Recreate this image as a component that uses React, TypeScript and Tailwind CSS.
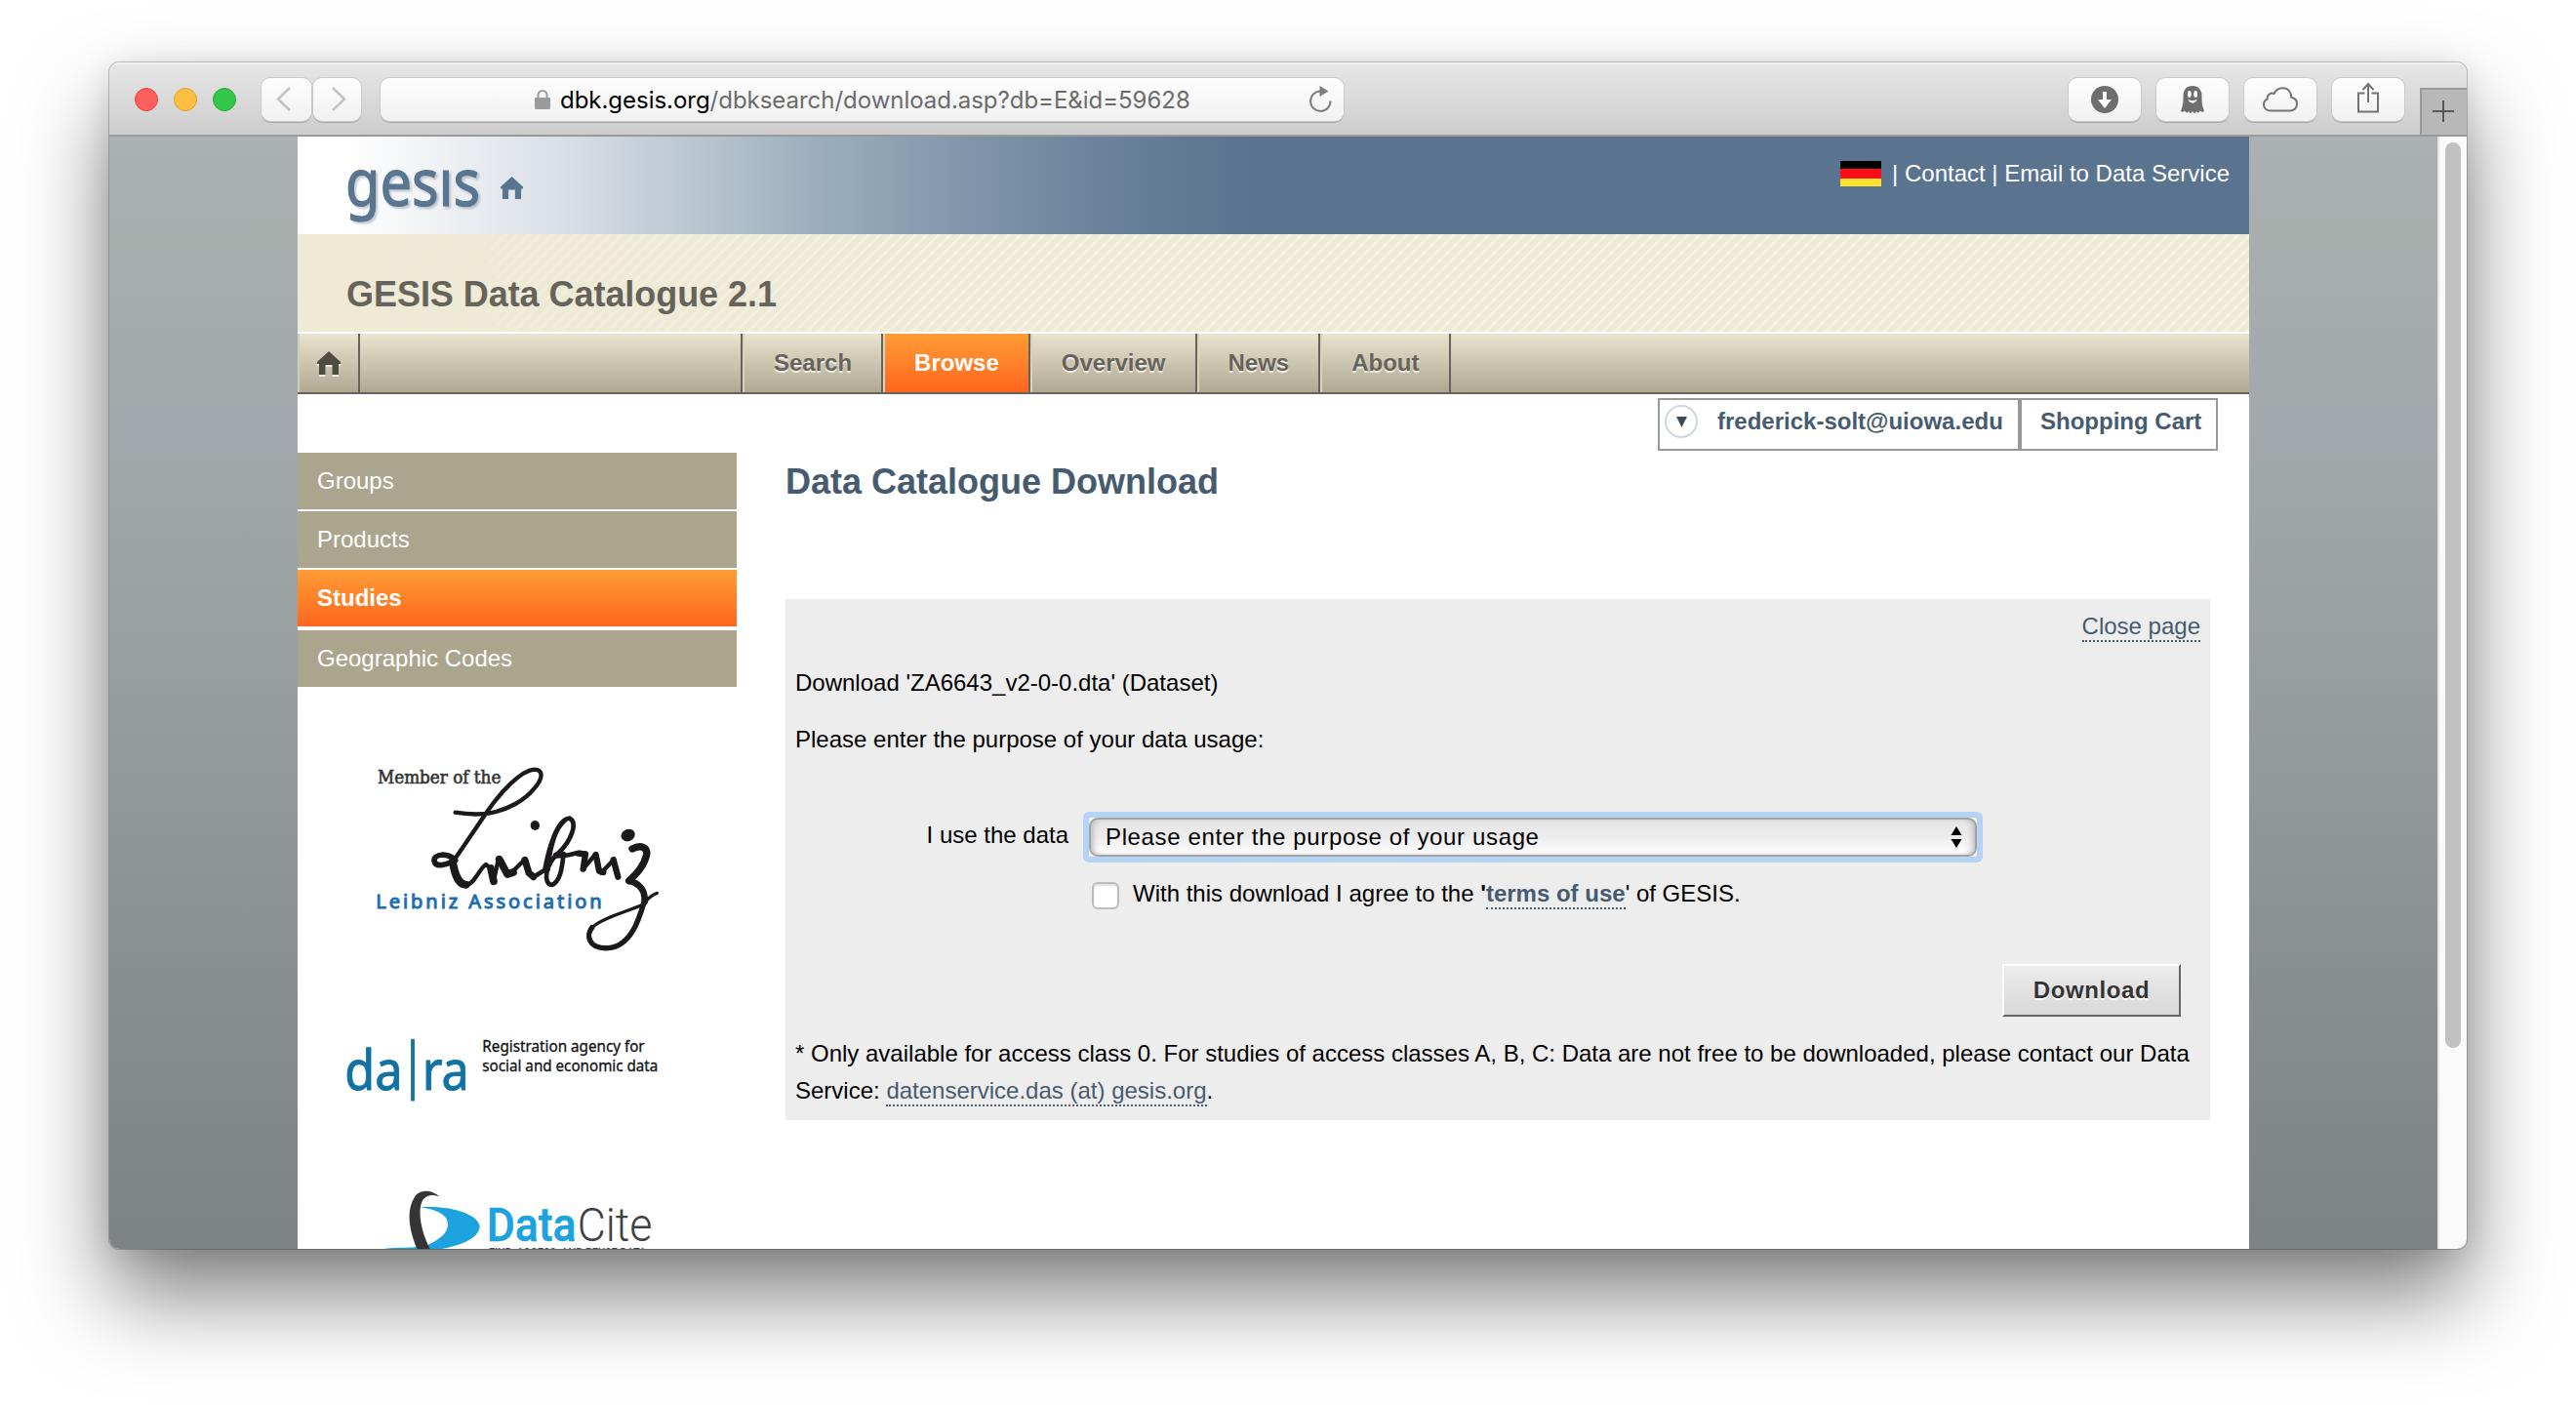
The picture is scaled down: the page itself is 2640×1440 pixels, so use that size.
import React from 'react';

const CHROME_BTN =
  'flex h-[44px] items-center justify-center rounded-[9px] bg-linear-to-b from-[#fdfdfd] to-[#f1f1f1] shadow-[0_0_0_1px_#c9c9c9,0_2px_0_0_#a9a9a9]';

function House({ fill, className }: { fill: string; className?: string }) {
  return (
    <svg viewBox="0 0 24 24" className={className} fill={fill}>
      <path d="M12 0 24 11v2h-2v11h-6.500V14h-7v10H2V13H0v-2z" />
    </svg>
  );
}

function Toolbar() {
  return (
    <div className="flex h-[76px] shrink-0 border-t-2 border-b-2 border-t-[#f1f1f1] border-b-[#9a9a9a] bg-linear-to-b from-[#e6e6e6] to-[#cdcdcd]">
      <div className="flex w-full items-start pt-[14px]">
        <div className="flex h-[44px] items-center gap-4 pl-[26px]">
          <span className="size-6 rounded-full border border-[#e2463f] bg-[#fd605c]" />
          <span className="size-6 rounded-full border border-[#e0a02f] bg-[#fdbe41]" />
          <span className="size-6 rounded-full border border-[#24a934] bg-[#34c84a]" />
        </div>
        <div className="ml-[26px] flex gap-[2px]">
          <button className={`${CHROME_BTN} w-[51px]`}>
            <svg viewBox="0 0 51 44" className="h-[44px] w-[51px]" fill="none" stroke="#c2c2c2" strokeWidth="2.500">
              <path d="M29 10 17 21.500 29 33" />
            </svg>
          </button>
          <button className={`${CHROME_BTN} w-[49px]`}>
            <svg viewBox="0 0 49 44" className="h-[44px] w-[49px]" fill="none" stroke="#c2c2c2" strokeWidth="2.500">
              <path d="M20 10 32 21.500 20 33" />
            </svg>
          </button>
        </div>
        <div className={`${CHROME_BTN} ml-[20px] w-[987px] justify-start!`}>
          <svg viewBox="0 0 16 20" className="ml-[158px] h-[20px] w-[16px] shrink-0">
            <path d="M3.500 9V5.500a4.500 4.500 0 0 1 9 0V9" fill="none" stroke="#9b9b9b" strokeWidth="2" />
            <rect y="8" width="16" height="12" rx="1" fill="#9b9b9b" />
          </svg>
          <span className="ml-[10px] w-[660px] pt-[2px] whitespace-nowrap font-['Inter'] text-[24px] leading-[44px] tracking-[-0.03px] text-[#6b6b6b]">
            <span className="text-black">dbk.gesis.org</span>/dbksearch/download.asp?db=E&amp;id=59628
          </span>
          <svg viewBox="0 0 24 28" className="mr-[12px] ml-auto h-[28px] w-[24px]">
            <path d="M22.500 15.500A10.200 10.200 0 1 1 12 5.500" fill="none" stroke="#7d7d7d" strokeWidth="2" />
            <path d="M11.500 0v11l9-5.500z" fill="#7d7d7d" />
          </svg>
        </div>
        <div className="ml-auto flex gap-[16px]">
          <button className={`${CHROME_BTN} w-[74px]`}>
            <svg viewBox="0 0 28 28" className="size-[28px]">
              <circle cx="14" cy="14" r="14" fill="#6e6e6e" />
              <path d="M12 6h4v8h5l-7 9-7-9h5z" fill="#fff" />
            </svg>
          </button>
          <button className={`${CHROME_BTN} w-[74px]`}>
            <svg viewBox="0 0 24 28" className="h-[28px] w-[24px]">
              <path
                d="M12 0C6 0 2.500 4 2.500 10c0 6 0 9-2.500 16 1.500 1 2.500 1 4-.5 1.300 2.500 2.700 2.500 4 .5 1.300 2.500 2.700 2.500 4 0 1.300 2.500 2.700 2.500 4 0 1.300 2 2.700 2 4-.5 1.500 1.500 2.500 1.500 4 .5-2.500-7-2.500-10-2.500-16C21.500 4 18 0 12 0z"
                fill="#6e6e6e"
              />
              <ellipse cx="8.800" cy="8.500" rx="1.900" ry="3.400" fill="#fff" />
              <ellipse cx="15.200" cy="8.500" rx="1.900" ry="3.400" fill="#fff" />
              <path d="M7.500 13.500c2 2 7 2 9 0-.5 5.500-8.500 5.500-9 0z" fill="#fff" />
            </svg>
          </button>
          <button className={`${CHROME_BTN} w-[74px]`}>
            <svg viewBox="0 0 36 26" className="h-[26px] w-[36px]" fill="none" stroke="#737373" strokeWidth="2">
              <path d="M8 24.500C3.500 24.500 1 21.500 1 18.300c0-2.800 1.400-4.600 3.600-5.600C4 8.500 8 5.500 11.500 7 13.500 3 17 1.300 20.500 1.300c5.500 0 8.700 4 8.700 9.500C33 11.500 35 14.500 35 17.500c0 4-3 7-7 7z" />
            </svg>
          </button>
          <button className={`${CHROME_BTN} w-[74px]`}>
            <svg viewBox="0 0 24 32" className="mb-[4px] h-[32px] w-[24px]" fill="none" stroke="#737373" strokeWidth="2">
              <path d="M8.500 11.500H2V30.500h20V11.500h-6.500M12 21V2M6.500 8 12 2l5.500 6" />
            </svg>
          </button>
        </div>
        <div className="mt-[10px] ml-[16px] flex h-[48px] w-[48px] shrink-0 items-center justify-center border-t-2 border-l-2 border-[#999] bg-[#b8b8b8] pr-[2px] pb-[2px]">
          <svg viewBox="0 0 22 22" className="size-[22px]" stroke="#595959" strokeWidth="2">
            <path d="M11 0v22M0 11h22" />
          </svg>
        </div>
      </div>
    </div>
  );
}

function Header() {
  return (
    <header className="flex h-[100px] shrink-0 items-start justify-between bg-[linear-gradient(to_right,#fff_0px,#fff_50px,#eef0f3_150px,#dbe1e8_260px,#c8d1db_345px,#b9c6d0_410px,#9fb1c0_515px,#8196ab_685px,#6b839b_820px,#5f7993_920px,#5a7490_985px)] pr-[20px]">
      <div className="flex">
        <svg viewBox="0 0 160 100" className="ml-[45px] h-[100px] w-[160px] overflow-visible">
          <text
            x="4"
            y="71"
            textLength="138"
            lengthAdjust="spacingAndGlyphs"
            fill="#5a7590"
            stroke="#5a7590"
            strokeWidth="1.200"
            className="font-['Noto_Sans'] text-[68px] drop-shadow-[2px_2px_1px_rgba(80,100,120,0.35)]"
            aria-label="gesis"
          >
            gesıs
          </text>
        </svg>
        <House fill="#5a7590" className="mt-[41px] ml-[3px] size-[23px]" />
      </div>
      <div className="flex items-center pt-[24px] text-[24px] leading-[28px] text-white">
        <svg viewBox="0 0 42 26" className="mr-[11px] h-[26px] w-[42px]">
          <rect width="42" height="9" fill="#000" />
          <rect y="8" width="42" height="10" fill="#ff0c18" />
          <rect y="18" width="42" height="8" fill="#ffe32e" />
        </svg>
        <span>|&nbsp;Contact&nbsp;|&nbsp;Email to Data Service</span>
      </div>
    </header>
  );
}

const NAV = [
  { label: 'Search' },
  { label: 'Browse', active: true },
  { label: 'Overview' },
  { label: 'News' },
  { label: 'About' },
];

function Nav() {
  return (
    <nav className="flex h-[64px] shrink-0 border-t-2 border-b-2 border-t-white border-b-[#66635a] bg-linear-to-b from-[#e9e4cf] to-[#b0a893]">
      <div className="flex w-[64px] items-center justify-center border-r-2 border-l-2 border-l-[#d3cdbb] border-r-[#66635a]">
        <House fill="#4e4c42" className="size-[24px] drop-shadow-[0_2px_0_rgba(255,255,255,0.7)]" />
      </div>
      <div className="w-[390px]" />
      <ul className="flex border-l-2 border-[#66635a] text-[24px] leading-[60px] font-bold">
        {NAV.map((n) => (
          <li
            key={n.label}
            className={
              n.active
                ? 'border-r-2 border-l-2 border-l-[#d8d2c0] border-r-[#66635a] bg-linear-to-b from-[#ff9c35] to-[#ff641e] bg-clip-padding px-[30px] text-white'
                : 'border-r-2 border-l-2 border-l-[#d8d2c0] border-r-[#66635a] px-[30px] text-[#66635a] [text-shadow:0_2px_1px_rgba(255,255,255,0.8)]'
            }
          >
            {n.label}
          </li>
        ))}
      </ul>
    </nav>
  );
}

function LeibnizLogo() {
  return (
    <svg viewBox="0 0 1140 780" className="mt-[36px] ml-[35px] h-[260px] w-[380px]">
      <text
        x="141"
        y="190"
        textLength="379"
        lengthAdjust="spacingAndGlyphs"
        fill="#333"
        stroke="#333"
        strokeWidth="2"
        className="font-['DejaVu_Serif'] text-[56px]"
      >
        Member of the
      </text>
      <text x="136" y="573" textLength="694" fill="#1c6db3" stroke="#1c6db3" strokeWidth="3" className="font-['Noto_Sans'] text-[60px]">
        Leibniz Association
      </text>
      <g fill="none" stroke="#1b191b" strokeLinecap="round" strokeLinejoin="round">
        <path strokeWidth="13" d="M380 278C410 283 450 285 482 281C545 270 595 238 622 205C652 172 650 146 622 146C580 150 520 215 478 275L383 415" />
        <path strokeWidth="17" d="M380 425C355 400 314 406 315 426C318 448 350 440 370 430" />
        <path strokeWidth="24" d="M372 430C378 470 392 500 412 500" />
        <path strokeWidth="13" d="M412 502C440 498 452 452 474 438L486 448" />
        <path strokeWidth="23" d="M489 450L498 490M515 422L540 468L558 462" />
        <path strokeWidth="13" d="M498 488L513 418M548 468L594 422" />
        <path strokeWidth="21" d="M594 424L606 464L620 476" />
        <path strokeWidth="14" d="M618 478L655 455C665 400 690 298 732 296C756 310 738 365 695 405C655 440 650 498 676 501C702 492 708 450 712 410C735 412 750 396 780 404" />
        <path strokeWidth="19" d="M690 410L712 408M758 404L780 406L773 452M812 408L822 458L835 462M866 424L880 476" />
        <path strokeWidth="13" d="M773 452L812 405M828 464L868 422M664 455C670 400 685 330 715 305" />
        <path strokeWidth="22" d="M924 390C950 376 972 385 968 408C960 445 935 468 914 488" />
        <path strokeWidth="20" d="M914 488C948 496 964 520 962 552" />
        <path strokeWidth="16" d="M960 555C945 605 920 690 850 695C785 698 783 652 800 632" />
        <path strokeWidth="10" d="M800 632C835 600 905 585 955 562C970 545 985 530 1000 526" />
      </g>
      <ellipse cx="625" cy="318" rx="14" ry="15" fill="#1b191b" />
      <ellipse cx="911" cy="348" rx="22" ry="18" fill="#1b191b" transform="rotate(-25 911 348)" />
    </svg>
  );
}

function DataLogos() {
  return (
    <svg viewBox="0 0 1200 750" className="mt-[30px] ml-[25px] h-[250px] w-[400px]">
      <g fill="#1272a5" stroke="#1272a5" strokeWidth="3" className="font-['Noto_Sans'] text-[172px]">
        <text x="70" y="261" textLength="178" lengthAdjust="spacingAndGlyphs">
          da
        </text>
        <rect x="275" y="106" width="8" height="188" />
        <text x="308" y="261" textLength="144" lengthAdjust="spacingAndGlyphs">
          ra
        </text>
      </g>
      <g fill="#111" stroke="#111" strokeWidth="1" className="font-['Noto_Sans'] text-[50px]">
        <text x="493" y="145" textLength="499" lengthAdjust="spacingAndGlyphs">
          Registration agency for
        </text>
        <text x="493" y="205" textLength="540" lengthAdjust="spacingAndGlyphs">
          social and economic data
        </text>
      </g>
      <path d="M302 622C400 615 482 645 485 681C482 720 420 742 355 752H180C230 742 300 752 330 736C365 718 388 700 387 672C385 642 345 628 302 622z" fill="#1ba2df" />
      <path d="M362 590C335 565 300 568 285 590C262 625 262 680 293 752H333C300 690 293 620 312 597C325 582 345 583 362 590z" fill="#353535" />
      <text x="506" y="725" textLength="276" lengthAdjust="spacingAndGlyphs" fill="#1ba2df" stroke="#1ba2df" strokeWidth="1.500" className="font-['Roboto'] text-[147px] font-medium">
        Data
      </text>
      <text x="785" y="725" textLength="230" lengthAdjust="spacingAndGlyphs" fill="#404040" className="font-['Roboto'] text-[147px] font-light">
        Cite
      </text>
      <text x="513" y="773" textLength="484" lengthAdjust="spacingAndGlyphs" fill="#404040" className="font-['Roboto'] text-[40px] font-medium">
        FIND, ACCESS, AND REUSE DATA
      </text>
    </svg>
  );
}

function Sidebar() {
  return (
    <aside className="w-[450px] shrink-0 pt-[60px]">
      <ul className="text-[24px] leading-[58px] text-white">
        <li className="mb-[2px] bg-[#aca58e] pl-[20px]">Groups</li>
        <li className="mb-[2px] bg-[#aca58e] pl-[20px]">Products</li>
        <li className="mb-[4px] bg-linear-to-b from-[#ff9c35] to-[#ff641e] pl-[20px] font-bold">Studies</li>
        <li className="bg-[#aca58e] pl-[20px]">Geographic Codes</li>
      </ul>
      <LeibnizLogo />
      <DataLogos />
    </aside>
  );
}

const LINK = 'border-b-2 border-dotted border-[#465b70] pb-px text-[#465b70]';

function DownloadPanel() {
  return (
    <section className="mt-[100px] h-[534px] w-[1460px] bg-[#ededed] px-[10px] pt-[9px] text-[24px] leading-[38px] text-black">
      <div className="text-right">
        <a className={LINK}>Close page</a>
      </div>
      <p className="mt-[20px]">Download 'ZA6643_v2-0-0.dta' (Dataset)</p>
      <p className="mt-[20px]">Please enter the purpose of your data usage:</p>
      <div className="mt-[61px] flex h-[40px] items-start">
        <label className="w-[280px] text-right leading-[36px]">I use the data</label>
        <div className="ml-[21px] rounded-[2px] bg-[#f2f2f2] shadow-[0_0_0_6px_#b5d4f5]">
          <div className="flex h-[40px] w-[910px] items-center justify-between rounded-[9px] border-2 border-[#a3a3a3] bg-linear-to-b from-[#e6e6e6] via-[#ececec] to-white pr-[13px] pl-[15px] shadow-[inset_5px_0_6px_-3px_#b5b5b5,inset_-5px_0_6px_-3px_#b5b5b5]">
            <span className="leading-[36px] tracking-[0.64px]">Please enter the purpose of your usage</span>
            <svg viewBox="0 0 12 22" className="h-[22px] w-[12px]" fill="#000">
              <path d="M6 0l5.500 9H.5zM6 22l5.500-9H.5z" />
            </svg>
          </div>
        </div>
      </div>
      <div className="mt-[19px] flex h-[38px]">
        <span className="mt-[7px] ml-[304px] size-[28px] rounded-[6px] border-2 border-[#bdbdbd] bg-white shadow-[inset_0_2px_2px_#e0e0e0]" />
        <span className="ml-[14px]">
          With this download I agree to the <b>'<a className={LINK}>terms of use</a></b>' of GESIS.
        </span>
      </div>
      <div className="mt-[53px] flex justify-end pr-[20px]">
        <button className="h-[54px] w-[183px] border-2 border-t-white border-r-[#666] border-b-[#666] border-l-white bg-linear-to-b from-[#ececec] to-[#d8d8d8] text-[24px] leading-[50px] font-bold tracking-[0.6px] text-[#333] [text-shadow:0_2px_1px_#fff]">
          Download
        </button>
      </div>
      <p className="mt-[19px] whitespace-nowrap">
        * Only available for access class 0. For studies of access classes A, B, C: Data are not free to be downloaded, please contact our Data
        <br />
        Service: <a className={LINK}>datenservice.das (at) gesis.org</a>.
      </p>
    </section>
  );
}

function Account() {
  return (
    <div className="mt-[4px] mr-[32px] flex h-[54px] self-end text-[24px] leading-[44px] font-bold text-[#465b70]">
      <div className="flex w-[371px] border-2 border-[#999] pl-[5px]">
        <span className="mt-[5px] mr-[20px] flex size-[34px] items-center justify-center rounded-full border-2 border-[#ccd7e2] bg-white">
          <svg viewBox="0 0 12 12" className="size-[11px]" fill="#3f4a54">
            <path d="M0 0h12L6 12z" />
          </svg>
        </span>
        frederick-solt@uiowa.edu
      </div>
      <div className="w-[203px] border-2 border-[#999] pl-[19px] whitespace-nowrap">Shopping Cart</div>
    </div>
  );
}

export default function App() {
  return (
    <div className="h-[1440px] w-[2640px] overflow-hidden bg-white pt-[64px] pl-[112px] font-['Liberation_Sans',sans-serif]">
      <div className="w-[2416px] rounded-[10px] shadow-[0_0_0_1px_rgba(0,0,0,0.22),0_48px_90px_0_rgba(0,0,0,0.5),0_4px_30px_0_rgba(0,0,0,0.1)]">
        <div className="flex h-[1216px] flex-col overflow-hidden rounded-[10px]">
          <Toolbar />
          <div className="flex h-[1140px] bg-[linear-gradient(to_bottom,#abb1b4_0%,#a8aeac_9%,#a3a8ac_26%,#999e9f_48%,#8b9092_72%,#7d8284_100%)]">
            <div className="ml-[193px] flex w-[2000px] flex-col bg-white">
              <Header />
              <div className="h-[100px] shrink-0 bg-[linear-gradient(to_right,#efe9d6_0px,#efe9d600_700px),repeating-linear-gradient(135deg,#eeead5_0px,#eeead5_5px,#f5f2e5_6px,#f5f2e5_7.500px,#eeead5_8.485px)] pt-[42px] pl-[50px] text-[36px] leading-[40px] font-bold tracking-[-0.05px] text-[#66635a]">
                GESIS Data Catalogue 2.1
              </div>
              <Nav />
              <div className="flex h-[876px]">
                <Sidebar />
                <main className="flex flex-1 flex-col pl-[50px]">
                  <Account />
                  <h1 className="mt-[12px] text-[36px] leading-[40px] font-bold text-[#465b70]">Data Catalogue Download</h1>
                  <DownloadPanel />
                </main>
              </div>
            </div>
            <div className="ml-auto w-[30px] border-l-2 border-[#e6e6e6] bg-[#fafafa] pt-[6px] pl-[6px]">
              <div className="h-[928px] w-[16px] rounded-full bg-[#c1c1c1]" />
            </div>
          </div>
        </div>
      </div>
    </div>
  );
}
